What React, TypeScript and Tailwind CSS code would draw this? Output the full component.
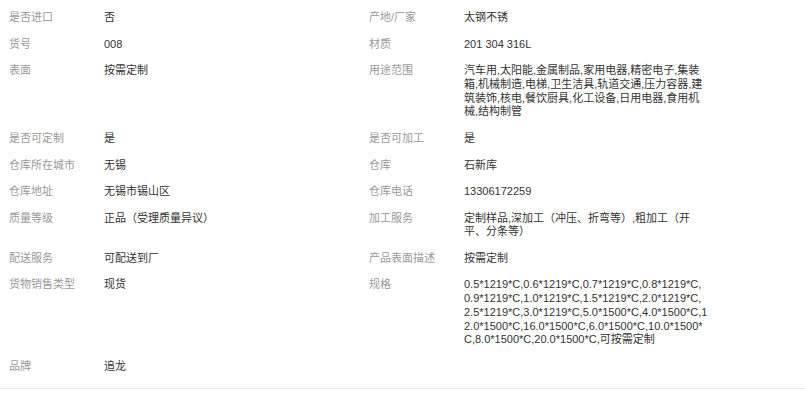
import React from 'react';

type Cell = { label: string; value: string | string[] };

const rows: [Cell, Cell | null][] = [
  [{ label: '是否进口', value: '否' }, { label: '产地/厂家', value: '太钢不锈' }],
  [{ label: '货号', value: '008' }, { label: '材质', value: '201 304 316L' }],
  [
    { label: '表面', value: '按需定制' },
    {
      label: '用途范围',
      value: [
        '汽车用,太阳能,金属制品,家用电器,精密电子,集装',
        '箱,机械制造,电梯,卫生洁具,轨道交通,压力容器,建',
        '筑装饰,核电,餐饮厨具,化工设备,日用电器,食用机',
        '械,结构制管',
      ],
    },
  ],
  [{ label: '是否可定制', value: '是' }, { label: '是否可加工', value: '是' }],
  [{ label: '仓库所在城市', value: '无锡' }, { label: '仓库', value: '石新库' }],
  [{ label: '仓库地址', value: '无锡市锡山区' }, { label: '仓库电话', value: '13306172259' }],
  [
    { label: '质量等级', value: '正品（受理质量异议）' },
    { label: '加工服务', value: ['定制样品,深加工（冲压、折弯等）,粗加工（开', '平、分条等）'] },
  ],
  [{ label: '配送服务', value: '可配送到厂' }, { label: '产品表面描述', value: '按需定制' }],
  [
    { label: '货物销售类型', value: '现货' },
    {
      label: '规格',
      value: [
        '0.5*1219*C,0.6*1219*C,0.7*1219*C,0.8*1219*C,',
        '0.9*1219*C,1.0*1219*C,1.5*1219*C,2.0*1219*C,',
        '2.5*1219*C,3.0*1219*C,5.0*1500*C,4.0*1500*C,1',
        '2.0*1500*C,16.0*1500*C,6.0*1500*C,10.0*1500*',
        'C,8.0*1500*C,20.0*1500*C,可按需定制',
      ],
    },
  ],
  [{ label: '品牌', value: '追龙' }, null],
];

const Field: React.FC<{ cell: Cell | null }> = ({ cell }) => {
  if (!cell) return <div />;
  const lines = Array.isArray(cell.value) ? cell.value : [cell.value];
  return (
    <div className="flex py-[6.4px] pl-[9px]">
      <div className="w-[95px] shrink-0 text-[#999999]">{cell.label}</div>
      <div className="w-[250px] text-[#333333]">
        {lines.map((line, i) => (
          <div key={i} className="whitespace-nowrap">
            {line}
          </div>
        ))}
      </div>
    </div>
  );
};

export default function App() {
  return (
    <div
      className="min-h-[402px] w-[805px] bg-white text-[11px] leading-[13.75px]"
      style={{ fontFamily: '"Liberation Sans", "Noto Sans CJK SC", sans-serif' }}
    >
      <div className="border-b border-[#e5e5e5] pt-[4.75px] pb-[8px]">
        {rows.map(([left, right], i) => (
          <div key={i} className="grid grid-cols-[360px_1fr]">
            <Field cell={left} />
            <Field cell={right} />
          </div>
        ))}
      </div>
    </div>
  );
}
